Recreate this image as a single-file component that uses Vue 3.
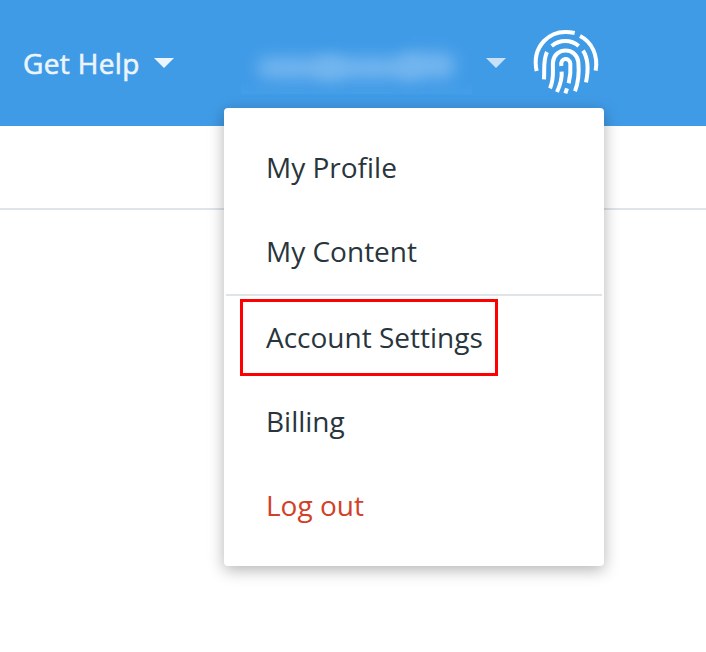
<script setup>
const groups = [
  [{ label: 'My Profile' }, { label: 'My Content' }],
  [{ label: 'Account Settings', marked: true }, { label: 'Billing' }, { label: 'Log out', danger: true }],
]
</script>

<template>
  <div class="page">
    <header class="topbar">
      <button class="help">
        <span class="help-label">Get Help</span>
        <svg class="caret" viewBox="0 0 20 10"><path d="M0 0H20L10 10Z" /></svg>
      </button>
      <div class="account">
        <div class="username"><i class="smudge a"></i><i class="smudge b"></i><i class="smudge c"></i></div>
        <svg class="caret dim" viewBox="0 0 20 10"><path d="M0 0H20L10 10Z" /></svg>
        <svg class="avatar" viewBox="0 0 252 252">
          <path d="M35 153C20 82 71 22 149 39" />
          <path d="M165 48C201 66 220 107 212 152" />
          <path d="M80 78C104 58 138 58 161 78" />
          <path d="M66 96C54 120 59 145 57 178" />
          <path d="M174 92C190 116 190 153 183 187" />
          <path d="M75 205C89 174 82 150 84 126C89 80 154 80 160 126C163 159 160 188 150 214" />
          <path d="M110 155C112 178 106 194 96 216" />
          <path d="M109 138C105 111 134 111 136 131C138 158 135 174 131 190" />
          <path d="M126 205L121 220" />
        </svg>
      </div>
      <nav class="menu">
        <ul v-for="(group, g) in groups" :key="g" class="group">
          <li v-for="item in group" :key="item.label" class="item" :class="{ danger: item.danger, marked: item.marked }">
            {{ item.label }}
          </li>
        </ul>
      </nav>
    </header>
    <div class="subbar"></div>
  </div>
</template>

<style>
body {
  background: #fff;
}
</style>

<style scoped>
.page {
  height: 652px;
  overflow: hidden;
  font-family: 'Open Sans', 'Noto Sans', sans-serif;
  font-size: 28px;
  color: #29353c;
}
.topbar {
  position: relative;
  box-sizing: border-box;
  height: 126px;
  padding-left: 23px;
  display: flex;
  align-items: flex-start;
  background: #409be7;
}
.help {
  display: flex;
  align-items: center;
  width: 151px;
  height: 126px;
  padding: 0;
  border: 0;
  background: none;
  color: #ecf5fd;
  font: inherit;
  line-height: 126px;
  justify-content: space-between;
  white-space: nowrap;
}
.help-label {
  letter-spacing: 0.35px;
  -webkit-text-stroke: 0.6px #ecf5fd;
}
.caret {
  width: 20px;
  height: 10px;
  flex: none;
  fill: #ecf5fd;
}
.dim {
  fill: #c6e1f8;
  margin-left: 14px;
}
.account {
  display: flex;
  align-items: center;
  height: 126px;
  margin-left: 67px;
}
.username {
  box-sizing: border-box;
  width: 231px;
  height: 62px;
  padding: 0 17px;
  display: flex;
  align-items: center;
  overflow: hidden;
  background: linear-gradient(to bottom, #409be7 80%, #459ee8);
}
.smudge {
  height: 20px;
  margin-top: 9px;
  border-radius: 8px;
  background: #74b6ef;
  filter: blur(8px);
}
.a {
  width: 86px;
}
.b {
  width: 104px;
  margin-left: -28px;
}
.c {
  width: 54px;
  height: 25px;
  margin-top: 4px;
  margin-left: -20px;
}
.avatar {
  width: 84px;
  height: 84px;
  margin-left: 19px;
  margin-top: -2px;
  fill: none;
  stroke: #fff;
  stroke-width: 12;
}
.menu {
  position: absolute;
  z-index: 2;
  left: 224px;
  top: 108px;
  box-sizing: border-box;
  width: 380px;
  height: 458px;
  padding: 18px 2px;
  border-radius: 4px;
  background: #fff;
  box-shadow: 0 4px 16px rgba(0, 0, 0, 0.3);
}
.group {
  margin: 0;
  padding: 0;
  list-style: none;
}
.group + .group {
  border-top: 2px solid #dfe4e8;
}
.item {
  position: relative;
  height: 84px;
  padding-left: 40px;
  line-height: 82px;
}
.danger {
  color: #d23f2a;
}
.marked::after {
  content: '';
  position: absolute;
  box-sizing: border-box;
  left: 14px;
  top: 3px;
  width: 258px;
  height: 77px;
  border: 3px solid #f00;
}
.subbar {
  height: 82px;
  border-bottom: 2px solid #dfe4e8;
}
</style>
